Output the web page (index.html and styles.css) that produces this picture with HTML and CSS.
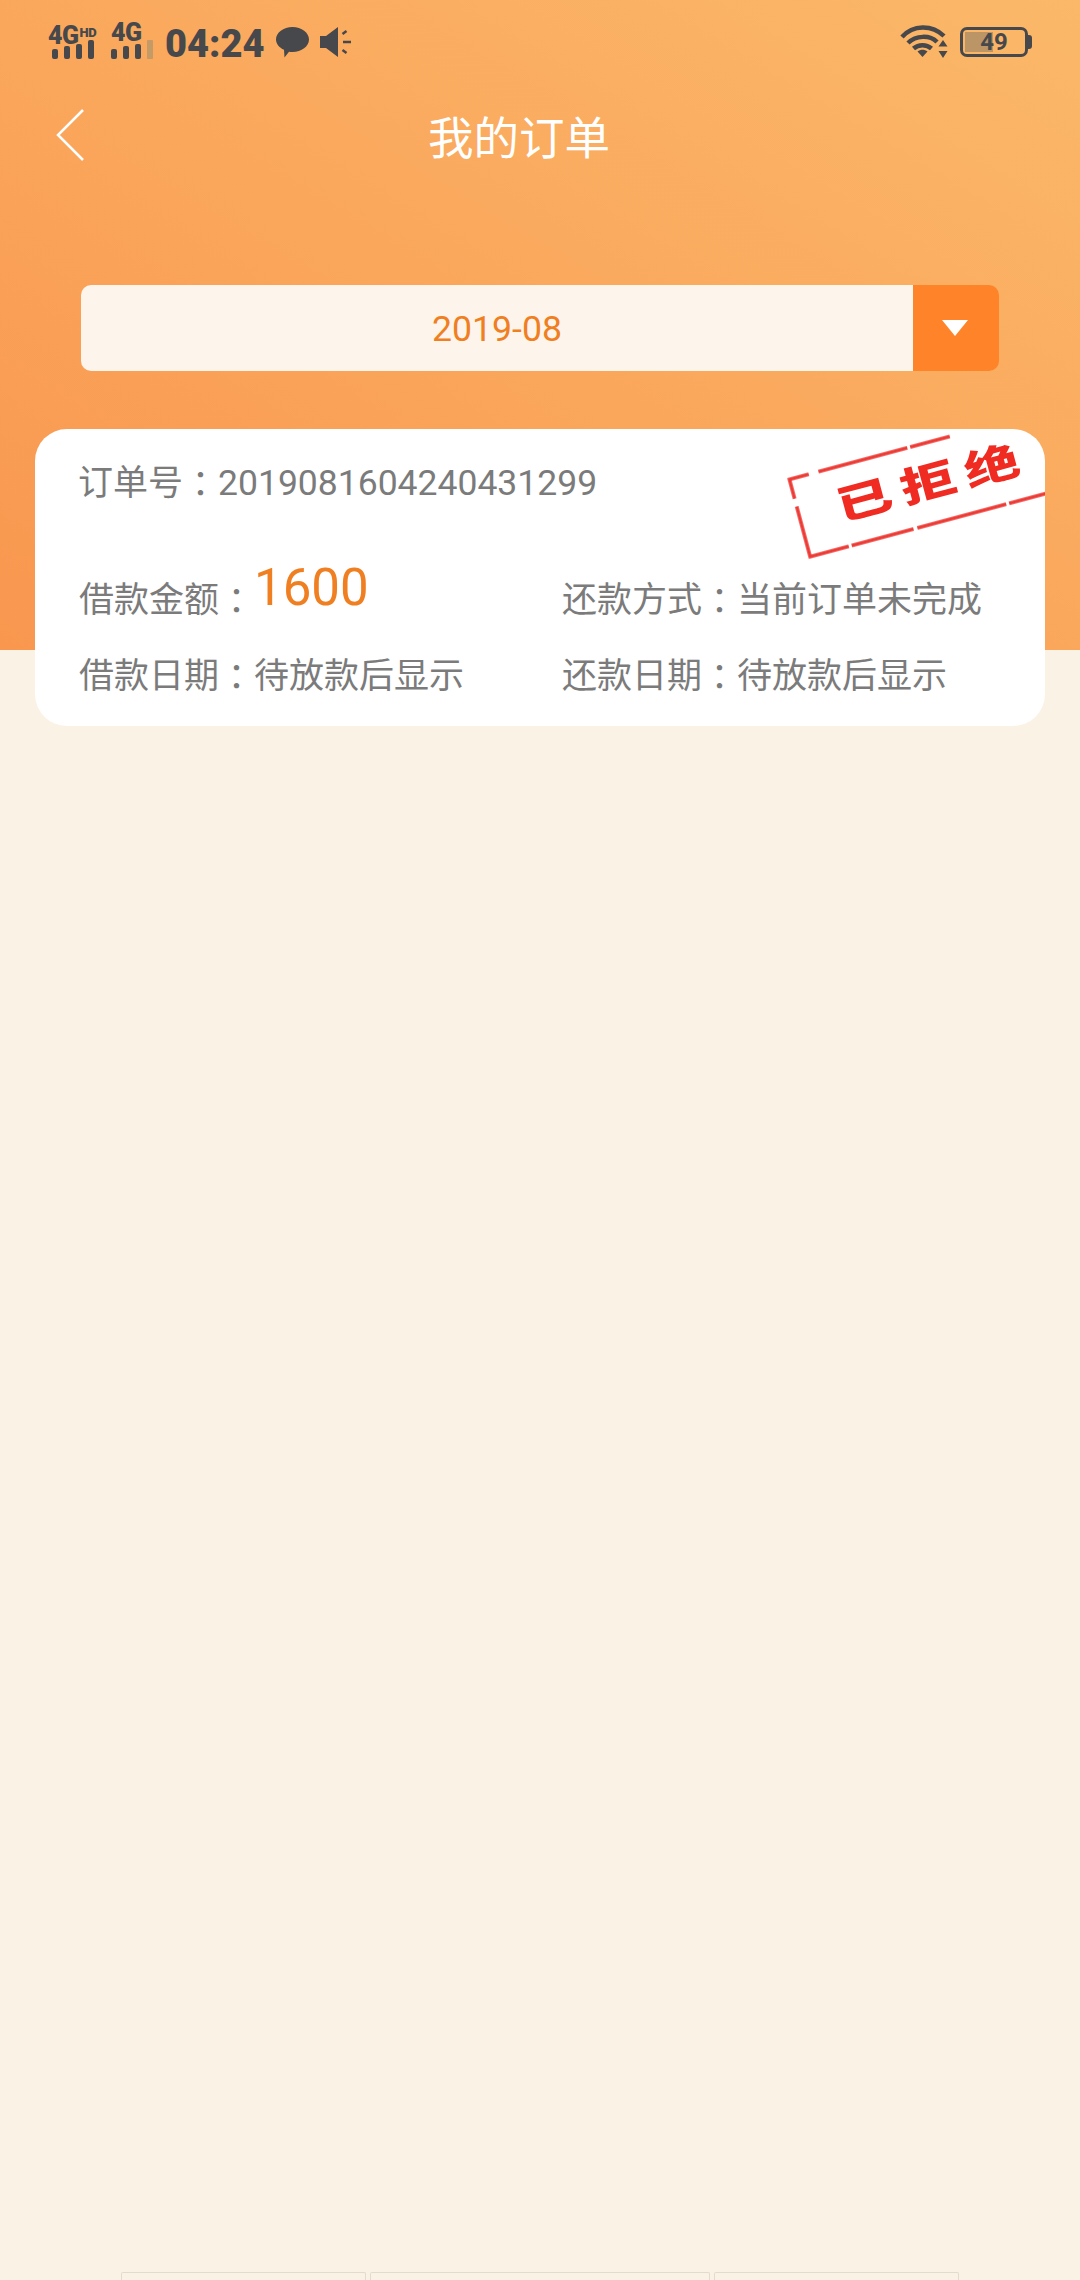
FILE: index.html
```html
<!DOCTYPE html>
<html lang="zh-CN">
<head>
<meta charset="utf-8">
<title>我的订单</title>
<link rel="stylesheet" href="styles.css">
</head>
<body>
<div class="page">
  <header class="hero">
    <div class="status">
      <div class="sig sig-a">
        <div class="net">4G<span class="hd">HD</span></div>
        <svg class="bars" width="50" height="20" viewBox="0 0 50 20"><rect x="4" y="9" width="6" height="10" rx="2"/><rect x="16" y="6" width="6" height="13" rx="2"/><rect x="28" y="4" width="6" height="15" rx="2"/><rect x="40" y="0" width="6" height="19" rx="2"/></svg>
      </div>
      <div class="sig sig-b">
        <div class="net">4G</div>
        <svg class="bars" width="42" height="20" viewBox="0 0 42 20"><rect x="0" y="9" width="6" height="10" rx="2"/><rect x="12" y="6" width="6" height="13" rx="2"/><rect x="24" y="4" width="6" height="15" rx="2"/><rect class="faint" x="36" y="0" width="6" height="19" rx="1"/></svg>
      </div>
      <span class="time">04:24</span>
      <svg class="chat" width="33" height="32" viewBox="0 0 33 32"><path d="M16.500 1C25.600 1 33 6.600 33 13.500S25.600 26 16.500 26c-1.200 0-2.400-.1-3.500-.3L8.500 31.500 8 23.800C3.100 21.600 0 17.800 0 13.500 0 6.600 7.400 1 16.500 1z"/></svg>
      <svg class="spk" width="32" height="32" viewBox="0 0 32 32"><path d="M0 10h6L18 1v30L6 22H0z"/><path class="tick" d="M22.500 8l4-3M23 16h8M22.500 24l4 3"/></svg>
      <div class="status-right">
        <svg class="wifi" width="48" height="34" viewBox="0 0 48 34"><path class="arc" d="M2 12C13-.5 32-.5 44 11M8 18c8-8 22-8 29-1M13.500 23.500c5-4.500 13-4.500 18 0"/><path d="M17.500 26.500c3-2.500 7-2.500 10 0L22.500 32z"/><path d="M43 15l4.500 6.500h-9zM43 33l-4.500-7h9z"/></svg>
        <div class="batt"><div class="batt-fill"></div><span class="batt-num">49</span></div>
        <div class="batt-nub"></div>
      </div>
    </div>
    <nav class="nav">
      <svg class="back" width="28" height="52" viewBox="0 0 28 52"><path d="M27 1L2 26l25 25"/></svg>
      <h1 class="title">我的订单</h1>
    </nav>
    <div class="picker">
      <div class="picker-value">2019-08</div>
      <div class="picker-btn"><span class="tri"></span></div>
    </div>
  </header>

  <section class="card">
    <p class="order-no">订单号<span class="colon" lang="zh-TW">：</span><span class="digits">2019081604240431299</span></p>
    <div class="grid">
      <p class="cell">借款金额<span class="colon" lang="zh-TW">：</span><span class="amount">1600</span></p>
      <p class="cell">还款方式<span class="colon" lang="zh-TW">：</span>当前订单未完成</p>
      <p class="cell">借款日期<span class="colon" lang="zh-TW">：</span>待放款后显示</p>
      <p class="cell">还款日期<span class="colon" lang="zh-TW">：</span>待放款后显示</p>
    </div>
    <div class="stamp">
      <svg class="stamp-frame" width="320" height="84" viewBox="0 0 320 84"><path d="M2 22V2H22"/><path d="M32 2H168"/><path d="M2 30V82H320"/></svg>
      <span class="stamp-text">已拒绝</span>
    </div>
  </section>

  <div class="bottom">
    <div class="tab tab-a"></div>
    <div class="tab tab-b"></div>
    <div class="tab tab-a"></div>
  </div>
</div>
</body>
</html>
```
FILE: styles.css
```css
* { box-sizing: border-box; }
html, body { margin: 0; padding: 0; }
body {
  font-family: Roboto, "Noto Sans CJK SC", sans-serif;
  background: #fbf2e6;
}
.page {
  width: 1080px;
  height: 2280px;
  display: flex;
  flex-direction: column;
  overflow: hidden;
  background: #fbf2e6;
}
.hero {
  height: 650px;
  flex: none;
  background: linear-gradient(to top right, #f9974f, #fbb869);
}
.status {
  height: 84px;
  padding-left: 48px;
  display: flex;
  align-items: center;
  color: #47484b;
}
.status svg { fill: #47484b; display: block; }
.sig { display: flex; flex-direction: column; }
.sig-a { width: 50px; }
.sig-b { width: 42px; margin-left: 13px; }
.net {
  font-size: 25px;
  font-weight: 900;
  line-height: 18px;
  height: 18px;
  letter-spacing: -0.5px;
  white-space: nowrap;
}
.hd { font-size: 13px; vertical-align: 7px; margin-left: 1px; }
.bars { margin-top: -2px; }
.status .faint { fill: #c49a66; }
.time {
  margin-left: 12px;
  margin-top: 4px;
  font-size: 38px;
  font-weight: 900;
  line-height: 40px;
}
.chat { margin-left: 11px; }
.spk { margin-left: 11px; }
.status .tick { fill: none; stroke: #47484b; stroke-width: 2.500; }
.status-right {
  margin-left: auto;
  margin-right: 48px;
  display: flex;
  align-items: center;
}
.status .arc { fill: none; stroke: #47484b; stroke-width: 4.500; }
.batt {
  position: relative;
  margin-left: 12px;
  width: 68px;
  height: 30px;
  border: 3px solid #47484b;
  border-radius: 7px;
}
.batt-fill {
  position: absolute;
  left: 2px;
  top: 2px;
  bottom: 2px;
  width: 28px;
  background: #bb9565;
}
.batt-num {
  position: absolute;
  inset: 0;
  text-align: center;
  font-size: 24px;
  font-weight: 700;
  line-height: 24px;
  color: #47484b;
}
.batt-nub {
  width: 4px;
  height: 14px;
  background: #47484b;
  border-radius: 0 3px 3px 0;
}
.nav {
  height: 108px;
  padding-left: 56px;
  display: flex;
  align-items: center;
}
.back { display: block; fill: none; stroke: #fff; stroke-width: 2.500; margin-top: -6px; }
.title {
  margin: 3px 0 0 344px;
  font-size: 45.500px;
  font-weight: 400;
  line-height: 60px;
  color: #fff;
}
.picker {
  margin: 93px 81px 0;
  height: 86px;
  display: flex;
  border-radius: 10px;
  overflow: hidden;
}
.picker-value {
  flex: 1;
  background: #fdf4ec;
  color: #f07f22;
  font-size: 35.600px;
  line-height: 88px;
  text-align: center;
}
.picker-btn {
  width: 86px;
  background: #ff8429;
  display: flex;
  align-items: center;
  justify-content: center;
}
.tri {
  width: 0;
  height: 0;
  border-left: 13px solid transparent;
  border-right: 13px solid transparent;
  border-top: 16px solid #fff;
  margin-left: -2px;
}
.card {
  position: relative;
  flex: none;
  margin: -221px 35px 0;
  height: 297px;
  padding: 33px 0 0 44px;
  background: #fff;
  border-radius: 32px;
  overflow: hidden;
  color: #7b7b7b;
  font-size: 35px;
  line-height: 40px;
}
.order-no { margin: 0 0 0 -1px; }
.digits { font-size: 35.500px; }
.colon { font-family: "Noto Sans CJK TC", sans-serif; vertical-align: -2px; }
.grid {
  margin-top: 75px;
  display: grid;
  grid-template-columns: 483px 1fr;
  grid-auto-rows: 76px;
}
.cell { margin: 0; height: 40px; white-space: nowrap; }
.amount {
  font-size: 51px;
  line-height: 0;
  color: #f07f22;
  vertical-align: 7px;
}
.stamp {
  position: absolute;
  left: 752px;
  top: 49px;
  width: 320px;
  height: 84px;
  transform-origin: 0 0;
  transform: rotate(-15deg);
  display: flex;
  align-items: center;
  color: #ef2b22;
}
.stamp-frame {
  position: absolute;
  left: 0;
  top: 0;
  fill: none;
  stroke: #ee3a34;
  stroke-width: 3.500;
  stroke-dasharray: 92 3 64 4;
  filter: blur(0.5px);
}
.stamp-text {
  margin-left: 41px;
  font-size: 56px;
  font-weight: 900;
  line-height: 44px;
  letter-spacing: 10px;
  white-space: nowrap;
  transform: scaleY(0.72);
}
.bottom {
  margin-top: auto;
  height: 8px;
  padding-left: 121px;
  display: flex;
  gap: 4px;
}
.tab {
  height: 8px;
  border: 1px solid #e2dccf;
  border-bottom: none;
  border-radius: 2px 2px 0 0;
}
.tab-a { width: 245px; }
.tab-b { width: 340px; }
```
